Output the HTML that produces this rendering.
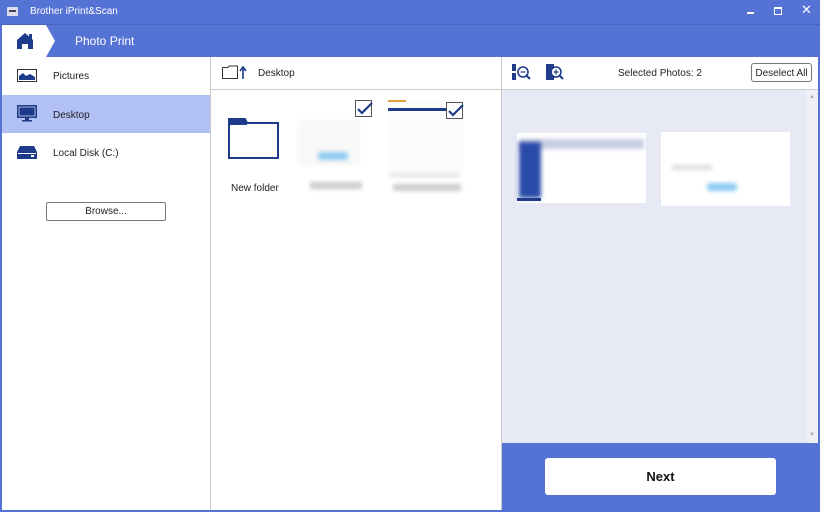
<!DOCTYPE html>
<html><head><style>
*{margin:0;padding:0;box-sizing:border-box}
body{width:820px;height:512px;background:#5572d5;font-family:"Liberation Sans",sans-serif;font-size:10px;color:#222;position:relative;overflow:hidden}
.a{position:absolute}
.blur{filter:blur(2px)}
</style></head><body>
<div class="a" style="left:0;top:0;width:820px;height:24px;background:#5572d5"></div>
<div class="a" style="left:7px;top:7px;width:11px;height:9px;background:#dde;border-radius:1px"></div>
<div class="a" style="left:9px;top:10px;width:7px;height:2px;background:#445"></div>
<div class="a" style="left:30px;top:6px;color:#fff;font-size:10px">Brother iPrint&amp;Scan</div>
<div class="a" style="left:747px;top:12px;width:7px;height:2px;background:#fff"></div>
<div class="a" style="left:774px;top:7px;width:8px;height:8px;border:1px solid #fff;border-top-width:2px"></div>
<div class="a" style="left:801px;top:2px;color:#fff;font-size:13px">✕</div>
<div class="a" style="left:0;top:24px;width:820px;height:1px;background:#4a62bd"></div>
<div class="a" style="left:2px;top:25px;width:40px;height:32px;background:#fff"></div>
<svg class="a" style="left:2px;top:25px" width="60" height="32"><polygon points="40,0 40,32 44,32 53,16 44,0" fill="#fff"/>
<path d="M15 24V15L23 8 31 15V24H26V19H20V24Z" fill="#1e3a8a"/><rect x="27" y="9" width="3" height="5" fill="#1e3a8a"/></svg>
<div class="a" style="left:75px;top:34px;color:#fff;font-size:12px">Photo Print</div>
<div class="a" style="left:2px;top:57px;width:208px;height:453px;background:#fff"></div>
<div class="a" style="left:2px;top:95px;width:208px;height:38px;background:#b1c0f5"></div>
<svg class="a" style="left:17px;top:69px" width="20" height="13"><rect x="0.5" y="0.5" width="19" height="12" fill="#fff" stroke="#333"/><path d="M2 11V7L6 4 9 7 13 5 18 8V11Z" fill="#1e3a8a"/></svg>
<div class="a" style="left:53px;top:71px">Pictures</div>
<svg class="a" style="left:17px;top:105px" width="20" height="17"><rect x="0" y="0" width="20" height="13" fill="#1e3a8a"/><rect x="2" y="2" width="16" height="9" fill="#1e3a8a" stroke="#fff" stroke-width=".6"/><rect x="8" y="13" width="4" height="2" fill="#1e3a8a"/><rect x="5" y="15" width="10" height="1.5" fill="#1e3a8a"/></svg>
<div class="a" style="left:53px;top:110px">Desktop</div>
<svg class="a" style="left:17px;top:146px" width="20" height="13"><path d="M3 0H17L20 6V13H0V6Z" fill="#1e3a8a"/><rect x="1" y="7" width="18" height="1" fill="#fff"/><rect x="14" y="9" width="3" height="2" fill="#fff"/></svg>
<div class="a" style="left:53px;top:148px">Local Disk (C:)</div>
<div class="a" style="left:46px;top:202px;width:120px;height:19px;border:1px solid #777;border-radius:2px;background:#fff;text-align:center;line-height:17px;font-size:10px">Browse...</div>
<div class="a" style="left:210px;top:57px;width:1px;height:453px;background:#ccc"></div>
<div class="a" style="left:211px;top:57px;width:290px;height:453px;background:#fff"></div>
<div class="a" style="left:211px;top:89px;width:290px;height:1px;background:#ccc"></div>
<svg class="a" style="left:222px;top:65px" width="26" height="15"><path d="M0.5 2.5H6L7 1H15.5V13.5H0.5Z" fill="none" stroke="#333"/><path d="M21 14V3M18 6L21 2 24 6" stroke="#1e3a8a" stroke-width="1.6" fill="none"/></svg>
<div class="a" style="left:258px;top:68px">Desktop</div>
<svg class="a" style="left:228px;top:117px" width="52" height="43"><path d="M1 41V2H17L19 6H50V41Z" fill="#fff" stroke="#1e3a8a" stroke-width="2"/><path d="M1 8V2H17L19 8Z" fill="#1e3a8a"/></svg>
<div class="a" style="left:231px;top:183px">New folder</div>
<div class="a blur" style="left:298px;top:120px;width:62px;height:46px;background:#f8f8f8"></div>
<div class="a blur" style="left:318px;top:152px;width:30px;height:8px;background:#8ccbf0;border-radius:3px"></div>
<div class="a blur" style="left:310px;top:182px;width:52px;height:7px;background:#ccc"></div>
<div class="a" style="left:387px;top:100px;width:76px;height:74px;background:#fcfcfc"></div>
<div class="a" style="left:388px;top:100px;width:18px;height:2px;background:#e0a040"></div>
<div class="a" style="left:388px;top:108px;width:70px;height:3px;background:#1e3a8a"></div>
<div class="a blur" style="left:390px;top:175px;width:70px;height:1px;background:#999"></div>
<div class="a blur" style="left:393px;top:184px;width:68px;height:7px;background:#ccc"></div>
<svg class="a" style="left:355px;top:100px" width="20" height="20"><rect x="0.5" y="0.5" width="16" height="16" fill="#fff" stroke="#555"/><path d="M3 9L7 13 17 3" stroke="#1e3a8a" stroke-width="2.2" fill="none"/></svg>
<svg class="a" style="left:446px;top:102px" width="20" height="20"><rect x="0.5" y="0.5" width="16" height="16" fill="#fff" stroke="#555"/><path d="M3 9L7 13 17 3" stroke="#1e3a8a" stroke-width="2.2" fill="none"/></svg>
<div class="a" style="left:501px;top:57px;width:1px;height:453px;background:#ccc"></div>
<div class="a" style="left:502px;top:57px;width:316px;height:33px;background:#fff"></div>
<div class="a" style="left:502px;top:89px;width:316px;height:1px;background:#ccc"></div>
<div class="a" style="left:502px;top:90px;width:316px;height:353px;background:#e7e9f4"></div>
<div class="a" style="left:806px;top:90px;width:12px;height:353px;background:#eef0f6"></div>
<div class="a" style="left:809px;top:94px;color:#aaa;font-size:6px">▲</div>
<div class="a" style="left:809px;top:432px;color:#aaa;font-size:6px">▼</div>
<svg class="a" style="left:512px;top:64px" width="20" height="17"><rect x="0" y="0" width="4" height="7" fill="#1e3a8a"/><rect x="0" y="9" width="4" height="7" fill="#1e3a8a"/><circle cx="11" cy="8" r="5" fill="none" stroke="#1e3a8a" stroke-width="1.6"/><path d="M14.5 11.5L18 15" stroke="#1e3a8a" stroke-width="2"/><path d="M8.5 8H13.5" stroke="#1e3a8a" stroke-width="1.2"/></svg>
<svg class="a" style="left:546px;top:64px" width="20" height="17"><rect x="0" y="0" width="8" height="16" fill="#1e3a8a"/><circle cx="10" cy="8" r="5" fill="#fff" stroke="#1e3a8a" stroke-width="1.6"/><path d="M13.5 11.5L17 15" stroke="#1e3a8a" stroke-width="2"/><path d="M7.5 8H12.5M10 5.5V10.5" stroke="#1e3a8a" stroke-width="1.2"/></svg>
<div class="a" style="left:618px;top:68px">Selected Photos: 2</div>
<div class="a" style="left:751px;top:63px;width:61px;height:19px;border:1px solid #777;border-radius:3px;background:#fff;text-align:center;line-height:19px">Deselect All</div>
<div class="a" style="left:517px;top:133px;width:129px;height:70px;background:#fff"></div>
<div class="a blur" style="left:519px;top:139px;width:125px;height:10px;background:#c6cde0"></div>
<div class="a blur" style="left:519px;top:142px;width:22px;height:56px;background:#2a4aa8"></div>
<div class="a" style="left:517px;top:198px;width:24px;height:3px;background:#1e3a8a"></div>
<div class="a" style="left:661px;top:132px;width:129px;height:74px;background:#fff"></div>
<div class="a blur" style="left:707px;top:183px;width:30px;height:8px;background:#8ccbf0;border-radius:3px"></div>
<div class="a blur" style="left:672px;top:165px;width:40px;height:5px;background:#ddd"></div>
<div class="a" style="left:502px;top:443px;width:316px;height:67px;background:#5572d5"></div>
<div class="a" style="left:545px;top:458px;width:231px;height:37px;background:#fff;border-radius:3px;text-align:center;line-height:37px;font-weight:bold;font-size:13px;color:#111">Next</div>
</body></html>
